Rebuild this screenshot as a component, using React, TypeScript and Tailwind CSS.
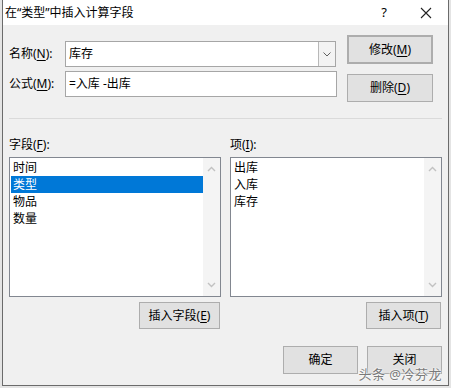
import { ReactNode } from "react"

const font = { fontFamily: '"Noto Sans", "Noto Sans CJK SC", sans-serif' }

function Btn({ children, className = "" }: { children: ReactNode; className?: string }) {
    return (
        <div
            className={`flex items-center justify-center bg-[#e1e1e1] border border-[#adadad] text-[12px] text-black leading-none ${className}`}
        >
            {children}
        </div>
    )
}

function Chevron({ up }: { up?: boolean }) {
    return (
        <svg width="9" height="6" viewBox="0 0 9 6">
            <path
                d={up ? "M1 5 L4.5 1.5 L8 5" : "M1 1 L4.5 4.5 L8 1"}
                fill="none"
                stroke="#c2c2c2"
                strokeWidth="1.4"
            />
        </svg>
    )
}

function ListBox({ items, selected }: { items: string[]; selected?: number }) {
    return (
        <div className="flex w-[212px] h-[140px] border border-[#828790] bg-white">
            <div className="flex-1 pt-px pl-px">
                {items.map((item, i) => (
                    <div
                        key={item}
                        className={`h-[17px] pl-[2px] text-[12px] leading-[17px] ${
                            i === selected ? "bg-[#0078d7] text-white" : "text-black"
                        }`}
                    >
                        {item}
                    </div>
                ))}
            </div>
            <div className="w-[17px] bg-[#f4f4f4] flex flex-col items-center justify-between py-[8px]">
                <Chevron up />
                <Chevron />
            </div>
        </div>
    )
}

function U({ children }: { children: ReactNode }) {
    return <span className="underline underline-offset-2">{children}</span>
}

export default function App() {
    return (
        <div className="w-[451px] h-[388px] bg-[#e4e4e4] overflow-hidden" style={font}>
            <div className="ml-[2px] w-[447px] h-[386px] flex flex-col border border-t-0 border-[#6b6b6b] bg-[#f0f0f0]">
                {/* title bar */}
                <div className="h-[25px] bg-white flex items-center pl-[2px] text-[12px] text-black">
                    <span className="flex-1">在“类型”中插入计算字段</span>
                    <span className="w-[16px] text-center text-[13px] mr-[28px]">?</span>
                    <svg width="12" height="12" viewBox="0 0 12 12" className="mr-[16px]">
                        <path d="M1 1 L11 11 M11 1 L1 11" stroke="#222" strokeWidth="1.1" />
                    </svg>
                </div>

                <div className="relative flex-1 flex flex-col text-[12px] text-black">
                    {/* name / formula */}
                    <div className="h-[93px] flex pl-[6px]">
                        <div className="pt-[16px] flex flex-col gap-[4px]">
                            <div className="flex items-center">
                                <span className="w-[56px]">
                                    名称(<U>N</U>):
                                </span>
                                <div className="w-[271px] h-[26px] flex border border-[#a6a6a6] bg-white">
                                    <span className="flex-1 pl-[3px] leading-[24px]">库存</span>
                                    <div className="w-[17px] border-l border-[#b8b8b8] bg-[#f3f3f3] flex items-center justify-center">
                                        <svg width="8" height="5" viewBox="0 0 8 5">
                                            <path d="M0.5 0.5 L4 4 L7.5 0.5" fill="none" stroke="#606060" strokeWidth="1" />
                                        </svg>
                                    </div>
                                </div>
                            </div>
                            <div className="flex items-center">
                                <span className="w-[56px]">
                                    公式(<U>M</U>):
                                </span>
                                <div className="w-[272px] h-[26px] border border-[#a6a6a6] bg-white pl-[3px] leading-[24px]">
                                    =入库 -出库
                                </div>
                            </div>
                        </div>
                        <div className="ml-[10px] pt-[10px] flex flex-col gap-[10px]">
                            <Btn className="w-[86px] h-[29px] border-2 border-[#0078d7]">
                                修改(<U>M</U>)
                            </Btn>
                            <Btn className="w-[86px] h-[28px]">
                                删除(<U>D</U>)
                            </Btn>
                        </div>
                    </div>

                    <div className="ml-[6px] w-[433px] h-px bg-[#dadada]" />

                    {/* lists */}
                    <div className="flex mt-[18px] h-[16px] leading-[16px] pl-[6px]">
                        <span className="w-[221px]">
                            字段(<U>F</U>):
                        </span>
                        <span>
                            项(<U>I</U>):
                        </span>
                    </div>
                    <div className="flex mt-[4px] pl-[6px] gap-[9px]">
                        <ListBox items={["时间", "类型", "物品", "数量"]} selected={1} />
                        <ListBox items={["出库", "入库", "库存"]} />
                    </div>

                    <div className="flex mt-[5px] pl-[6px] gap-[9px]">
                        <div className="w-[212px] flex justify-end pr-px">
                            <Btn className="w-[81px] h-[27px]">
                                插入字段(<U>E</U>)
                            </Btn>
                        </div>
                        <div className="w-[212px] flex justify-end pr-px">
                            <Btn className="w-[75px] h-[27px]">
                                插入项(<U>T</U>)
                            </Btn>
                        </div>
                    </div>

                    <div className="flex justify-end gap-[9px] mt-[17px] pr-[6px]">
                        <Btn className="w-[75px] h-[28px]">确定</Btn>
                        <Btn className="w-[75px] h-[28px]">关闭</Btn>
                    </div>

                    <span
                        className="absolute right-[6px] bottom-[1px] text-[13px] text-[#7a7a7a] tracking-[0.5px]"
                        style={{ textShadow: "0 0 2px #fff, 0 0 2px #fff" }}
                    >
                        头条 @冷芬龙
                    </span>
                </div>
            </div>
        </div>
    )
}
